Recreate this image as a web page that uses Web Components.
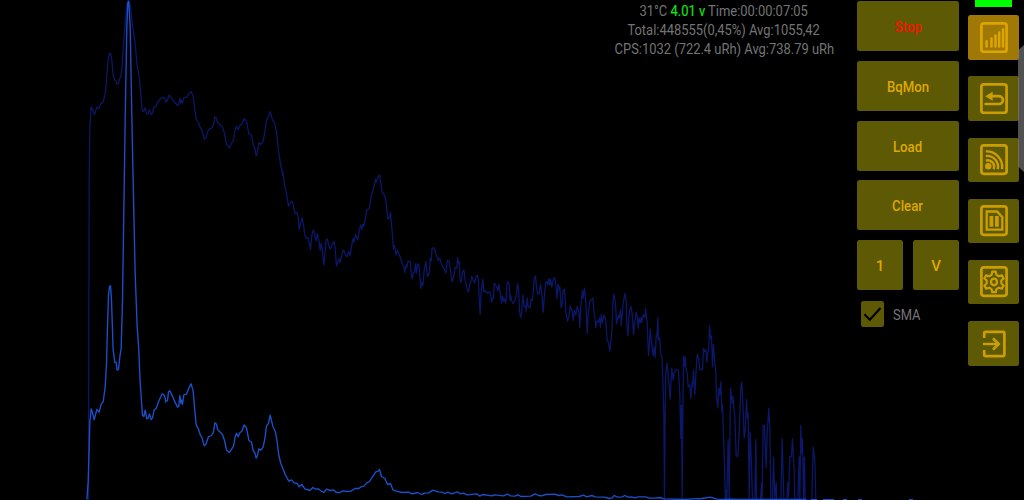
<!DOCTYPE html>
<html lang="en">
<head>
<meta charset="utf-8">
<title>Spectrum</title>
<style>
html,body{margin:0;height:100%;background:#000;overflow:hidden}
</style>
</head>
<body>
<spectrum-app></spectrum-app>
<script>
const define = (name, html, ready) => customElements.define(name, class extends HTMLElement {
  connectedCallback() {
    if (this.shadowRoot) return;
    const t = document.createElement('template');
    t.innerHTML = html;
    this.attachShadow({mode: 'open'}).append(t.content.cloneNode(true));
    if (ready) ready(this, this.shadowRoot);
  }
});

// Each chunk: origin x, origin y, then points in thirds of a pixel.
const logTrace = [
  [80,0,'25,1500 27,540 29,385 33,320 36,325 43,343 50,321 56,325 62,311 69,305 76,276 80,225 84,178 88,160 92,161 95,180 99,225 103,239 107,242 111,253 115,249 118,236 122,230 126,195 130,130 135,70 141,10 145,0 150,16 157,75 165,130 171,198 177,228 182,283 186,330 190,334 194,323 200,341 204,340 208,329 213,343 217,338 221,321 228,318 234,304 246,291 253,294 257,305 262,302 265,287 269,286 277,298 283,305 292,316 296,313 299,294 302,309 304,301 307,309 311,293 319,291 326,281 333,274 339,289 343,320 348,357 355,367 360,382 365,388 372,417 377,413 385,388 394,384 400,375 404,350 408,353 412,366 426,380 432,396 439,432 448,443 453,431 460,419 465,388 469,379 474,389 479,376 485,371 492,355 499,363 506,401 514,405 519,433 524,444 528,467 532,456 536,428 542,433 549,422 554,396 559,358 565,351 570,334 577,359 584,370 589,395 595,450 602,500 606,511 611,540'],
  [270,100,'34,205 38,216 43,254 49,281 55,318 60,308 66,303 70,320 75,341 80,337 84,350 87,388 91,370 96,353 100,375 104,403 108,415 114,413 118,432 121,448 125,405 130,389 134,409 138,422 141,400 146,420 150,451 153,429 156,447 161,495 164,465 168,418 172,417 176,438 181,447 186,431 192,425 195,447 199,498 203,485 206,475 210,487 215,462 220,449 225,461 230,470 236,454 240,467 244,439 249,415 252,426 256,403 263,419 267,391 272,374 275,388 278,372 281,378 287,345 291,328 297,326 303,290 310,265 316,238 319,245 323,231 328,224 332,249 336,278 340,279 346,295 349,320 353,357 358,352 361,337 363,362 367,407 370,446 373,436 378,465 381,451 386,459 391,474 396,489 401,499 404,517 408,494 410,502 413,484 420,484 423,515 426,536 430,516 433,517 436,491 439,518 442,491 446,494 449,525 452,565 455,547 458,556 462,511 467,484 472,530 478,515 480,474 483,483 486,443 492,444 498,462 504,481 509,474 514,493 522,506 527,519 532,480 537,484 541,511 546,545 552,523 555,502'],
  [440,230,'45,112 50,115 52,81 54,99 57,93 60,152 63,157 67,126 71,119 75,150 80,174 85,185 89,159 92,157 95,138 99,151 104,157 108,137 112,136 115,150 117,205 120,253 123,187 128,147 131,186 135,181 142,190 148,185 151,191 154,216 158,203 160,205 162,160 165,163 170,171 173,182 176,163 180,188 184,219 187,197 191,214 194,206 197,219 201,157 204,155 207,165 210,210 212,196 215,214 219,220 224,211 229,192 232,161 235,175 238,243 241,262 244,252 248,194 252,228 255,226 258,242 261,203 264,230 270,233 273,206 276,211 279,189 282,148 286,137 289,170 292,191 297,191 301,162 305,190 309,246 313,190 317,156 320,154 323,164 326,145 329,165 331,147 335,171 339,147 343,142 347,160 350,205 354,163 358,181 359,170 363,233 366,220 369,180 373,177 377,245 382,273 386,260 390,228 396,242 399,271 403,240 407,254 411,229 416,244 419,292 422,227 427,181 429,204 433,174 437,220 441,309 444,250 449,214 458,203 462,252 464,260 467,292 471,272 475,275 478,263 481,292 483,253 487,278 491,254 497,270 501,330 505,337 509,363 515,305 519,208 521,192 526,220 529,280 534,256 537,264 541,239 543,286 549,220 554,190 558,208 560,280 563,317 568,240 572,228 576,250 580,313 584,275 588,246 592,263 594,294 597,263 600,278 603,261 605,277 609,253 614,262 616,235 621,278 625,376 628,340 630,297 634,335 639,376 642,350 645,382 648,315 650,323 653,262'],
  [630,290,'85,150 89,145 91,190 95,197 98,270 101,375 103,629 105,375 107,245 111,219 115,265 120,326 125,234 129,270 132,247 136,239 145,240 149,315 152,445 154,345 156,629 158,390 160,198 162,230 165,200 168,240 171,245 174,290 179,284 182,325 186,275 187,290 190,240 194,313 198,238 201,193 205,204 209,238 217,238 220,175 224,185 227,178 230,216 233,187 236,178 238,107 242,147 244,137 247,230 250,162 254,220 257,244 259,320 263,353 266,295 269,314 272,275 275,366 277,345 281,465 285,600 286,629 289,600 290,629 294,448 297,629 301,293 306,340 308,317 314,380 318,497 323,499 327,430 332,290 335,275 339,360 342,444 346,410 349,328 352,384 354,370 357,629 360,425 363,500 367,629 374,629 377,448 379,629 391,629 394,578 396,629 399,405 403,406 408,532 411,430 416,355 419,410 422,629 427,629 430,501 434,629 438,577 440,629 452,629 456,446 461,629 470,629 473,577 475,620 479,500 484,499 487,446 492,540 494,629 503,629 507,500 509,629 512,405 515,490 517,446 520,629 523,500 525,629 545,629 549,471 554,510 557,629']
];
const linTrace = [
  [80,270,'20,688 24,635 27,535 29,457 33,416 36,424 42,449 50,418 57,426 63,402 69,395 75,350 79,280 82,170 85,75 88,49 91,47 94,90 97,180 99,240 104,277 108,277 111,300 115,298 119,260 123,235 127,90 130,-110 135,-450 140,-730 143,-802 146,-806 150,-730 156,-410 160,-220 165,10 171,170 176,240 179,320 183,380 187,436 191,439 195,420 200,446 204,444 208,431 213,448 217,443 222,419 228,415 234,397 246,371 253,376 257,395 262,391 265,365 269,362 277,378 283,393 292,411 296,408 299,376 302,399 304,389 307,403 311,374 319,372 326,354 333,341 339,364 343,410 348,464 355,477 361,496 365,501 372,527 377,523 385,500 394,496 400,485 404,458 409,462 412,478 427,493 433,511 439,540 448,547 453,539 460,528 465,500 469,489 474,500 479,488 485,483 492,464 499,473 506,510 514,516 519,541 524,548 528,564 532,555 536,536 542,540 549,530 554,506 559,467 565,460 570,435 578,468 585,483 590,508 596,556 602,580 608,594 615,613 626,633 634,629 642,638 651,640 657,650'],
  [280,440,'65,133 74,146 89,151 98,142 107,147 114,146 122,152 131,157 139,147 150,151 161,149 168,157 179,157 188,152 200,154 212,153 225,145 236,145 244,139 251,138 260,128 268,124 275,113 287,95 294,93 298,88 304,109 314,115 322,133 331,130 338,149 349,153 366,157 385,156 396,161 412,157 424,163 434,159 446,158 458,150 473,155 485,156 494,160 503,156 514,161 532,155 540,161 550,159 561,164 590,161 599,168 607,163 636,167 643,164 670,167 682,162 691,167 704,168 714,164 722,169 752,168 765,161 775,166 785,167 796,163 825,162 835,166 845,164 860,170 897,169 910,165 920,170 935,166 945,170 973,171 987,175 996,173 1002,166 1012,171 1026,170 1034,166 1043,171 1055,170 1063,173 1074,170 1096,170 1108,174 1122,174 1140,172'],
  [650,485,'40,41 100,43 130,41 155,40 180,36 200,42 220,43 240,42 270,43 468,43']
];
const path = chunks => 'M' + chunks.map(([x, y, s]) => s.split(' ').map(p => {
  const [u, v] = p.split(',').map(Number);
  return (x + (u + .5) / 3).toFixed(2) + ' ' + (y + (v + .5) / 3).toFixed(2);
}).join('L')).join('L');

define('spectrum-plot', `<style>
:host{display:block;width:1024px;height:500px}
svg{display:block}
path{fill:none;stroke-linejoin:round}
.log{stroke:#0c1767;stroke-width:1.3}
.lin{stroke:#1c50cb;stroke-width:1.35}
</style><svg width="1024" height="500"><path class="log"/><path class="lin"/><path class="lin" d="M811 499.6h6m6 0h11m9 0h4m11 0h4m47 0h4"/></svg>`, (el, root) => {
  root.querySelector('.log').setAttribute('d', path(logTrace));
  root.querySelector('.lin').setAttribute('d', path(linTrace));
});

define('status-lines', `<style>
:host{display:block;width:240px;color:#747474;font:15px/19.4px Roboto,sans-serif;text-align:center}
div{white-space:nowrap;height:19.4px;display:flex;justify-content:center}
span{display:block;transform:scaleX(.862)}
b{font-weight:400;color:#14e414;-webkit-text-stroke:.15px #14e414}
</style><div><span>31°C <b>4.01 v</b> Time:00:00:07:05</span></div>
<div><span>Total:448555(0,45%) Avg:1055,42</span></div>
<div><span>CPS:1032 (722.4 uRh) Avg:738.79 uRh</span></div>`);

define('pad-button', `<style>
:host{display:flex;flex:1;height:50px;align-items:center;justify-content:center;box-sizing:border-box;border-radius:2.5px;background:#5d5904;color:#dfa800;font:500 15px/20px Roboto,sans-serif}
:host([danger]){color:#f01800}
span{transform:translateY(.8px) scaleX(.88)}
:host([glyph]) span{transform:translateY(1px)}
</style><span><slot></slot></span>`);

define('sma-check', `<style>
:host{display:flex;align-items:center;gap:9px;padding-left:4px;height:26px;color:#747474;font:15px/20px Roboto,sans-serif}
i{display:block;width:23px;height:26px;border-radius:2.5px;background:#5d5904}
svg{display:block}
span{transform:translateY(.6px) scaleX(.86);transform-origin:0 50%}
</style><i><svg width="23" height="26"><path d="M3.4 13.3l5.5 5.4L19.5 6.9" fill="none" stroke="#000" stroke-width="2.2"/></svg></i><span><slot></slot></span>`);

const frame = '<rect x="1.4" y="1.4" width="25.2" height="28.4" rx="2.5"/>';
const icons = {
  bars: frame + '<path d="M6.6 19.2v5.4M11.5 16.6v8M15.5 13.5v11.1M19.2 10.6v14M23 7.6v17" stroke-width="2.5" stroke-linecap="round"/>',
  back: frame + '<path d="M9 13.2h10a3.9 3.9 0 0 1 0 7.8H5.6" stroke-width="2.7" stroke-linecap="round"/><path d="M5.2 13.3l7.4-4.5v9z" class="f"/>',
  rss: frame + '<circle cx="8.3" cy="22.2" r="3.2" class="f"/><path d="M5.8 16.6a6.4 6.4 0 0 1 7.8 8.6M5.8 12a11 11 0 0 1 12 13.2M5.8 7.4A15.5 15.5 0 0 1 22 25.2" stroke-width="2.4"/>',
  card: frame + '<path d="M6.7 6.5h10.4l5.2 5.7v12.5H6.7z" stroke-width="2.3"/><path d="M11.4 11v10.8M16.9 11v10.8" stroke-width="3.7"/>',
  gear: frame + '<path d="M12.2 5.7h3.6l.6 3.2 2.4 1.4 3-1.1 1.8 3.2-2.3 2.1v3l2.3 2.1-1.8 3.2-3-1.1-2.4 1.4-.6 3.1h-3.6l-.6-3.1-2.4-1.4-3 1.1-1.8-3.2 2.3-2.1v-3l-2.3-2.1 1.8-3.2 3 1.1 2.4-1.4z" stroke-width="2.2" stroke-linejoin="round"/><ellipse cx="14" cy="15.9" rx="3" ry="3.3" stroke-width="2.4"/>',
  exit: '<path d="M4.2 10V5.5a1.6 1.6 0 0 1 1.6-1.6h17a1.6 1.6 0 0 1 1.6 1.6v21a1.6 1.6 0 0 1-1.6 1.6h-17a1.6 1.6 0 0 1-1.6-1.6V22" stroke-width="2.7"/><path d="M3 16h14M13 10.4l5.6 5.6-5.6 5.6" stroke-width="2.7"/>'
};
define('nav-button', `<style>
:host{display:flex;width:51px;height:44.7px;align-items:center;justify-content:center;border-radius:2.5px;background:#5d5904}
:host([active]){background:#a07806}
svg{display:block;fill:none;stroke:#cc9e03;stroke-width:2.7}
:host([active]) svg{stroke:#dca501}
.f{fill:#cc9e03;stroke:none}
</style><svg width="28" height="31.4" viewBox="0 0 28 31.4"></svg>`, (el, root) => {
  root.querySelector('svg').innerHTML = icons[el.getAttribute('icon')];
});

define('spectrum-app', `<style>
:host{display:grid;grid-template:500px/1024px;background:#000;position:relative;overflow:hidden}
spectrum-plot{grid-area:1/1}
.panel{grid-area:1/1;display:flex;justify-content:flex-end;align-items:flex-start;padding-right:5px}
status-lines{margin:1.6px 13px 0 0}
.pad{width:102px;display:flex;flex-direction:column;gap:9.7px;padding-top:1.4px;margin-right:9px}
.pad pad-button{flex:none}
.row{display:flex;gap:10px}.row pad-button{flex:1}
sma-check{margin-top:1px}
nav{display:flex;flex-direction:column;gap:16.45px;align-items:center}
.led{width:37px;height:7px;background:#0f0;margin-bottom:-8.2px}
.handle{position:absolute;right:0;top:45px;width:6.5px;height:127px;background:rgba(125,125,125,.65);clip-path:polygon(100% 0,0 6px,0 121px,100% 100%)}
</style>
<spectrum-plot></spectrum-plot>
<div class="panel">
<status-lines></status-lines>
<div class="pad"><pad-button danger>Stop</pad-button><pad-button>BqMon</pad-button><pad-button>Load</pad-button><pad-button>Clear</pad-button><div class="row"><pad-button glyph>1</pad-button><pad-button glyph>V</pad-button></div><sma-check>SMA</sma-check></div>
<nav><div class="led"></div><nav-button icon="bars" active></nav-button><nav-button icon="back"></nav-button><nav-button icon="rss"></nav-button><nav-button icon="card"></nav-button><nav-button icon="gear"></nav-button><nav-button icon="exit"></nav-button></nav>
</div>
<div class="handle"></div>`);
</script>
</body>
</html>
